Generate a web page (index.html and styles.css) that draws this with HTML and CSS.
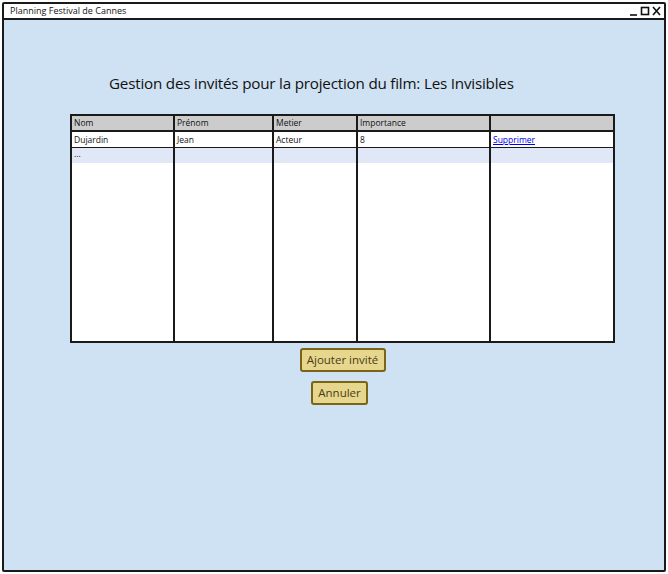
FILE: index.html
```html
<!DOCTYPE html>
<html lang="fr">
<head>
<meta charset="utf-8">
<title>Planning Festival de Cannes</title>
<link rel="stylesheet" href="styles.css">
</head>
<body>
<div class="window">
  <div class="titlebar">
    <span class="title">Planning Festival de Cannes</span>
    <span class="controls">
      <svg width="36" height="12" viewBox="0 0 36 12">
        <path d="M2 10 L9 10" stroke="#111" stroke-width="1.6" fill="none"/>
        <rect x="13.5" y="2.5" width="7" height="7" stroke="#111" stroke-width="1.6" fill="none"/>
        <path d="M25 2 L32 10 M32 2 L25 10" stroke="#111" stroke-width="1.6" fill="none"/>
      </svg>
    </span>
  </div>
  <div class="content">
    <h1 class="heading">Gestion des invités pour la projection du film: Les Invisibles</h1>
    <div class="panel">
      <table class="grid">
        <colgroup>
          <col class="c1"><col class="c2"><col class="c3"><col class="c4"><col class="c5">
        </colgroup>
        <thead>
          <tr><th>Nom</th><th>Prénom</th><th>Metier</th><th>Importance</th><th></th></tr>
        </thead>
        <tbody>
          <tr class="row-white"><td>Dujardin</td><td>Jean</td><td>Acteur</td><td>8</td><td><a href="#">Supprimer</a></td></tr>
          <tr class="row-blue"><td>...</td><td></td><td></td><td></td><td></td></tr>
          <tr class="row-fill"><td></td><td></td><td></td><td></td><td></td></tr>
        </tbody>
      </table>
      <div class="actions">
        <button class="btn btn-add">Ajouter invité</button>
        <button class="btn btn-cancel">Annuler</button>
      </div>
    </div>
  </div>
</div>
</body>
</html>
```
FILE: styles.css
```css
html, body {
  margin: 0;
  padding: 0;
  background: #ffffff;
}
body {
  font-family: "Open Sans", "DejaVu Sans", sans-serif;
  color: #111;
}
.window {
  margin: 2px;
  width: 660px;
  height: 566px;
  border: 2px solid #1a1a1a;
  border-radius: 2px;
  background: #cfe2f3;
  display: flex;
  flex-direction: column;
}
.titlebar {
  height: 14px;
  background: #ffffff;
  border-bottom: 2px solid #1a1a1a;
  display: flex;
  align-items: center;
  justify-content: space-between;
  padding: 0 0 0 6px;
}
.title {
  font-size: 9px;
  line-height: 14px;
}
.controls {
  display: flex;
  align-items: center;
  height: 14px;
}
.controls svg {
  display: block;
}
.content {
  display: flex;
  flex-direction: column;
  padding-left: 67px;
}
.heading {
  margin: 53px 0 0 38px;
  font-size: 15.2px;
  font-weight: normal;
  line-height: 20px;
  letter-spacing: -0.2px;
  white-space: nowrap;
}
.panel {
  margin-top: 21px;
  width: 543px;
  display: flex;
  flex-direction: column;
  align-items: center;
}
.grid {
  width: 543px;
  border-collapse: collapse;
  table-layout: fixed;
  border: 2px solid #1a1a1a;
  font-size: 8.5px;
}
.c1 { width: 103px; }
.c2 { width: 99px; }
.c3 { width: 84px; }
.c4 { width: 133px; }
.c5 { width: 124px; }
.grid th, .grid td {
  border-left: 2px solid #1a1a1a;
  border-right: 2px solid #1a1a1a;
  padding: 0 2px;
  text-align: left;
  font-weight: normal;
  white-space: nowrap;
  overflow: hidden;
}
.grid thead th {
  background: #cccccc;
  height: 14px;
  border-bottom: 2px solid #1a1a1a;
  line-height: 14px;
}
.row-white td {
  background: #ffffff;
  height: 15px;
  border-bottom: 1.5px solid #1a1a1a;
  line-height: 15px;
}
.row-blue td {
  background: #e0e8f8;
  height: 15px;
  line-height: 12px;
  vertical-align: top;
}
.row-fill td {
  background: #ffffff;
  height: 178px;
}
.grid a {
  color: #0000ee;
  text-decoration: underline;
}
.actions {
  display: flex;
  flex-direction: column;
  align-items: center;
  gap: 9px;
  margin-top: 5px;
}
.btn {
  font-family: "Open Sans", "DejaVu Sans", sans-serif;
  font-size: 11.5px;
  color: #4a3d10;
  background: #e6d68e;
  border: 2px solid #7a6418;
  border-radius: 3px;
  height: 24px;
  padding: 0;
  line-height: 18px;
  white-space: nowrap;
}
.btn-add { width: 86px; }
.btn-cancel { width: 57px; margin-right: 6px; }
```
